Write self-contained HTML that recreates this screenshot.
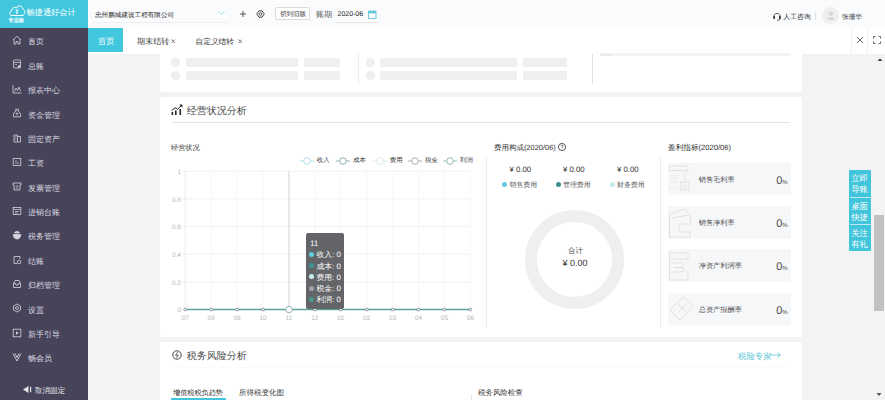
<!DOCTYPE html>
<html><head><meta charset="utf-8">
<style>
*{margin:0;padding:0;box-sizing:border-box;}
html,body{width:885px;height:400px;overflow:hidden;}
body{position:relative;background:#f2f3f5;font-family:"Liberation Sans",sans-serif;color:#333;text-rendering:geometricPrecision;}
.abs{position:absolute;}
.t{position:absolute;white-space:nowrap;line-height:1;}
#side{left:0;top:0;width:88px;height:400px;background:#474358;}
#logo{left:0;top:0;width:88px;height:27.5px;background:#40c7de;}
.nt{font-size:8px;color:#dcdce4;}
#top{left:88px;top:0;width:797px;height:28px;background:#fafbfd;}
#tabs{left:88px;top:28px;width:797px;height:25.5px;background:#fff;}
.card{position:absolute;background:#fff;border-radius:2px;}
.sk{position:absolute;background:#efefef;border-radius:1px;}
.skc{position:absolute;background:#efefef;border-radius:50%;}
.yl{font-size:6.5px;color:#b8b8b8;}
.xl{font-size:6.5px;color:#b8b8b8;width:10px;text-align:center;}
.lg{font-size:6.45px;color:#444;}
.ttr{font-size:7.8px;color:#fff;}
.dot{position:absolute;width:5px;height:5px;border-radius:50%;}
.rc{position:absolute;left:667.5px;width:123.5px;height:32.5px;background:#f6f7f9;}
.rc .n{position:absolute;left:31.2px;top:13.2px;font-size:7.2px;color:#555;line-height:1;white-space:nowrap;}
.rc .v{position:absolute;right:3.8px;top:13px;font-size:11px;color:#4a4a4a;letter-spacing:-0.3px;line-height:1;white-space:nowrap;}
.rc .v small{font-size:6px;}


</style></head><body>
<div id="side" class="abs">
  <div id="logo" class="abs">
    <svg class="abs" style="left:8px;top:4px" width="18" height="13" viewBox="0 0 18 13"><path d="M4 11.5 C1 11.5 1 7.5 3.5 7 C3.5 4 6.5 2.5 8.5 4 C9.5 1 14.5 1 14.8 5 C17.5 5.5 17.5 11.5 14 11.5 Z" fill="none" stroke="#fff" stroke-width="1"/><path d="M7.8 7 L10.2 7 M7.8 8.8 L10.2 8.8 M9 7 V10.5 M7.8 5 L9 7 L10.2 5" fill="none" stroke="#fff" stroke-width="0.7"/></svg>
    <span class="t" style="left:26.5px;top:8.70px;font-size:8.2px;color:#fff;">畅捷通好会计</span>
    <span class="t" style="left:8.2px;top:18.8px;font-size:5.3px;color:#fff;font-weight:bold;">专业版</span>
  </div>
  <svg class="abs" style="left:11.5px;top:35.10px" width="10" height="10" viewBox="0 0 10 10"><path d="M1 5 L5 1.2 L9 5 M2 4.2 V9 H4 V6.5 H6 V9 H8 V4.2" fill="none" stroke="#d6d6de" stroke-width="0.8"/></svg><span class="t nt" style="left:28px;top:38.40px">首页</span>
<svg class="abs" style="left:11.5px;top:59.48px" width="10" height="10" viewBox="0 0 10 10"><rect x="1.5" y="1" width="7" height="8" rx="1" fill="none" stroke="#d6d6de" stroke-width="0.8"/><path d="M1.5 3.5 H8.5 M3 5.5 H5" stroke="#d6d6de" stroke-width="0.7"/><circle cx="7" cy="7.5" r="1.2" fill="#d6d6de"/></svg><span class="t nt" style="left:28px;top:62.78px">总账</span>
<svg class="abs" style="left:11.5px;top:83.86px" width="10" height="10" viewBox="0 0 10 10"><path d="M1 1 V9 H9.5 M2.5 7.5 L4 4 L5.5 6.5 L7 3 L8.5 7" fill="none" stroke="#d6d6de" stroke-width="0.8"/></svg><span class="t nt" style="left:28px;top:87.16px">报表中心</span>
<svg class="abs" style="left:11.5px;top:108.24px" width="10" height="10" viewBox="0 0 10 10"><path d="M3.5 1.2 H6.5 L5.8 3 C8 4 9 6 8.5 8.8 H1.5 C1 6 2 4 4.2 3 Z" fill="none" stroke="#d6d6de" stroke-width="0.8"/><path d="M3.5 5.5 H6.5 M5 4.5 V7.5" stroke="#d6d6de" stroke-width="0.7"/></svg><span class="t nt" style="left:28px;top:111.54px">资金管理</span>
<svg class="abs" style="left:11.5px;top:132.62px" width="10" height="10" viewBox="0 0 10 10"><path d="M2 2 H5.5 V9 H2 Z M5.5 3.5 H8.5 V9 H5.5" fill="none" stroke="#d6d6de" stroke-width="0.8"/><path d="M3 4 H4.5 M3 6 H4.5" stroke="#d6d6de" stroke-width="0.7"/></svg><span class="t nt" style="left:28px;top:135.92px">固定资产</span>
<svg class="abs" style="left:11.5px;top:157.00px" width="10" height="10" viewBox="0 0 10 10"><rect x="1.2" y="1.5" width="7.6" height="7" fill="none" stroke="#d6d6de" stroke-width="0.8"/><path d="M3 4 H5 M3 6 H7" stroke="#d6d6de" stroke-width="0.7"/></svg><span class="t nt" style="left:28px;top:160.30px">工资</span>
<svg class="abs" style="left:11.5px;top:181.38px" width="10" height="10" viewBox="0 0 10 10"><path d="M1 2 H9 V4 H8 V9 H2 V4 H1 Z M3.5 5 H6.5 M3.5 7 H6.5" fill="none" stroke="#d6d6de" stroke-width="0.8"/></svg><span class="t nt" style="left:28px;top:184.68px">发票管理</span>
<svg class="abs" style="left:11.5px;top:205.76px" width="10" height="10" viewBox="0 0 10 10"><rect x="1.2" y="1.5" width="7.6" height="7" fill="none" stroke="#d6d6de" stroke-width="0.8"/><path d="M1.2 3.5 H8.8 M3 5.5 H7 M3 7 H5.5" stroke="#d6d6de" stroke-width="0.7"/></svg><span class="t nt" style="left:28px;top:209.06px">进销台账</span>
<svg class="abs" style="left:11.5px;top:230.14px" width="10" height="10" viewBox="0 0 10 10"><path d="M2.5 3 C2.5 1 7.5 1 7.5 3 M1.2 4.5 H8.8 C8.8 7.5 7 9 5 9 C3 9 1.2 7.5 1.2 4.5 Z" fill="#d6d6de" stroke="#d6d6de" stroke-width="0.8"/><path d="M3 3 H7" stroke="#d6d6de" stroke-width="0.8"/></svg><span class="t nt" style="left:28px;top:233.44px">税务管理</span>
<svg class="abs" style="left:11.5px;top:254.52px" width="10" height="10" viewBox="0 0 10 10"><path d="M8 4 V1.5 H2 V8.5 H5" fill="none" stroke="#d6d6de" stroke-width="0.8"/><circle cx="7" cy="7" r="1.8" fill="none" stroke="#d6d6de" stroke-width="0.8"/></svg><span class="t nt" style="left:28px;top:257.82px">结账</span>
<svg class="abs" style="left:11.5px;top:278.90px" width="10" height="10" viewBox="0 0 10 10"><path d="M1.5 4.5 L3 1.5 H7 L8.5 4.5 V8.5 H1.5 Z M1.5 4.5 H3.8 V6 H6.2 V4.5 H8.5" fill="none" stroke="#d6d6de" stroke-width="0.8"/></svg><span class="t nt" style="left:28px;top:282.20px">归档管理</span>
<svg class="abs" style="left:11.5px;top:303.28px" width="10" height="10" viewBox="0 0 10 10"><path d="M5 1 L8.5 3 V7 L5 9 L1.5 7 V3 Z" fill="none" stroke="#d6d6de" stroke-width="0.8"/><circle cx="5" cy="5" r="1.5" fill="none" stroke="#d6d6de" stroke-width="0.8"/></svg><span class="t nt" style="left:28px;top:306.58px">设置</span>
<svg class="abs" style="left:11.5px;top:327.66px" width="10" height="10" viewBox="0 0 10 10"><rect x="1.2" y="1.2" width="7.6" height="7.6" fill="none" stroke="#d6d6de" stroke-width="0.8"/><path d="M4 3.3 L6.6 5 L4 6.7 Z" fill="#d6d6de"/></svg><span class="t nt" style="left:28px;top:330.96px">新手引导</span>
<svg class="abs" style="left:11.5px;top:352.04px" width="10" height="10" viewBox="0 0 10 10"><path d="M1 1.5 L5 9 L9 1.5 M3 1.5 L5 5.5 L7 1.5" fill="none" stroke="#d6d6de" stroke-width="0.9"/></svg><span class="t nt" style="left:28px;top:355.34px">畅会员</span>

  <svg class="abs" style="left:22.5px;top:386px" width="10" height="7" viewBox="0 0 10 7"><path d="M0 3.5 L5.5 0 V7 Z" fill="#e6e6ec"/><rect x="7" y="0.8" width="1.2" height="5.4" fill="#e6e6ec"/></svg><span class="t" style="left:35px;top:387.00px;font-size:7.55px;color:#e6e6ec;">取消固定</span>
</div>

<div id="top" class="abs"></div>
<span class="t" style="left:95.00px;top:12.70px;font-size:6.6px;color:#222;">忠州鹏城建设工程有限公司</span>
<div class="abs" style="left:92px;top:22px;width:136px;height:1px;background:#eeeff1;"></div>
<svg class="abs" style="left:218.3px;top:11px" width="7" height="4" viewBox="0 0 7 4"><path d="M0.4 0.4 L3.5 3.5 L6.6 0.4" fill="none" stroke="#8fd3da" stroke-width="0.8"/></svg>
<svg class="abs" style="left:239.5px;top:10.8px" width="6" height="6" viewBox="0 0 6 6"><path d="M3 0 V6 M0 3 H6" stroke="#333" stroke-width="0.8"/></svg>
<svg class="abs" style="left:256px;top:9.5px" width="9" height="8" viewBox="0 0 9 8"><path d="M3 0.8 H6 L8.3 4 L6 7.2 H3 L0.7 4 Z" fill="none" stroke="#333" stroke-width="0.9" stroke-linejoin="round"/><circle cx="4.5" cy="4" r="1.4" fill="none" stroke="#333" stroke-width="0.8"/></svg>
<div class="abs" style="left:275px;top:7px;width:34.5px;height:13px;border:0.7px solid #dcdcdc;border-radius:2px;background:#fff;"></div>
<span class="t" style="left:280px;top:11.6px;font-size:6.5px;color:#333;">切到旧版</span>
<span class="t" style="left:316px;top:11.30px;font-size:8.1px;color:#555;">账期</span>
<span class="t" style="left:337.5px;top:12.30px;font-size:6.97px;color:#222;">2020-06</span>
<div class="abs" style="left:336px;top:22px;width:42px;height:1px;background:#e6e6e6;"></div>
<svg class="abs" style="left:368px;top:9.8px" width="8.5" height="9" viewBox="0 0 8.5 9"><rect x="0.5" y="1.3" width="7.5" height="7.2" fill="none" stroke="#5ec6d6" stroke-width="0.9"/><rect x="0.5" y="1.3" width="7.5" height="2" fill="#5ec6d6"/><path d="M2.5 0 V2 M6 0 V2" stroke="#5ec6d6" stroke-width="0.9"/></svg>

<svg class="abs" style="left:772.5px;top:11.5px" width="8" height="9" viewBox="0 0 8 9"><path d="M1 5 V3.8 C1 0.6 7 0.6 7 3.8 V5 M4 8.2 H5.5 C6.5 8.2 7 7.5 7 6.5" fill="none" stroke="#333" stroke-width="0.8"/><rect x="0.3" y="4" width="1.7" height="3" rx="0.5" fill="#333"/><rect x="6" y="4" width="1.7" height="3" rx="0.5" fill="#333"/></svg>
<span class="t" style="left:783.3px;top:14.80px;font-size:6.86px;color:#333;">人工咨询</span>
<div class="abs" style="left:815px;top:12px;width:0.8px;height:7.5px;background:#e0e0e0;"></div>
<div class="abs" style="left:822px;top:6.7px;width:17px;height:17px;border-radius:50%;background:#efefef;"></div>
<svg class="abs" style="left:826.5px;top:10.5px" width="8" height="9" viewBox="0 0 8 9"><circle cx="4" cy="2.6" r="2.2" fill="#d4d4d4"/><path d="M0.3 8.8 C0.3 5.3 7.7 5.3 7.7 8.8 Z" fill="#d4d4d4"/></svg>
<span class="t" style="left:842px;top:14.80px;font-size:6.67px;color:#333;">张珊华</span>

<div id="tabs" class="abs"></div>
<div class="abs" style="left:88px;top:28px;width:34.8px;height:23.8px;background:#42c8de;"></div>
<span class="t" style="left:98px;top:37.9px;font-size:8.2px;color:#fff;">首页</span>
<span class="t" style="left:137px;top:37.80px;font-size:8.1px;color:#333;">期末结转</span><svg class="abs" style="left:171.3px;top:38.8px" width="4.5" height="4.5" viewBox="0 0 4.5 4.5"><path d="M0.4 0.4 L4.1 4.1 M4.1 0.4 L0.4 4.1" stroke="#555" stroke-width="0.75"/></svg>
<span class="t" style="left:195.5px;top:37.80px;font-size:7.7px;color:#333;">自定义结转</span><svg class="abs" style="left:237.8px;top:38.8px" width="4.5" height="4.5" viewBox="0 0 4.5 4.5"><path d="M0.4 0.4 L4.1 4.1 M4.1 0.4 L0.4 4.1" stroke="#555" stroke-width="0.75"/></svg>
<div class="abs" style="left:851px;top:28px;width:1px;height:25.5px;background:#f0f0f0;"></div>
<div class="abs" style="left:867px;top:28px;width:1px;height:25.5px;background:#f0f0f0;"></div>
<svg class="abs" style="left:856px;top:36px" width="8" height="8" viewBox="0 0 8 8"><path d="M1 1 L7 7 M7 1 L1 7" stroke="#555" stroke-width="0.9"/></svg>
<svg class="abs" style="left:872.5px;top:36px" width="8" height="8" viewBox="0 0 8 8"><path d="M0.5 2.5 V0.5 H2.5 M5.5 0.5 H7.5 V2.5 M7.5 5.5 V7.5 H5.5 M2.5 7.5 H0.5 V5.5" fill="none" stroke="#555" stroke-width="0.9"/></svg>

<!-- card 1 -->
<div class="card" style="left:160.2px;top:51.5px;width:641.8px;height:40.5px;border-radius:0 0 2px 2px;"></div>
<div class="skc" style="left:171.2px;top:58.3px;width:8.5px;height:8.5px;"></div>
<div class="skc" style="left:171.2px;top:71.3px;width:8.5px;height:8.5px;"></div>
<div class="sk" style="left:186.2px;top:58.3px;width:111.5px;height:8.4px;"></div>
<div class="sk" style="left:186.2px;top:71.3px;width:111.5px;height:8.4px;"></div>
<div class="sk" style="left:304px;top:58.3px;width:36px;height:8.4px;"></div>
<div class="sk" style="left:304px;top:71.3px;width:36px;height:8.4px;"></div>
<div class="abs" style="left:358.3px;top:53.5px;width:0.8px;height:30px;background:#ececec;"></div>
<div class="skc" style="left:366px;top:58.3px;width:8.5px;height:8.5px;"></div>
<div class="skc" style="left:366px;top:71.3px;width:8.5px;height:8.5px;"></div>
<div class="sk" style="left:380.2px;top:58.3px;width:136.5px;height:8.4px;"></div>
<div class="sk" style="left:380.2px;top:71.3px;width:136.5px;height:8.4px;"></div>
<div class="sk" style="left:523px;top:58.3px;width:44px;height:8.4px;"></div>
<div class="sk" style="left:523px;top:71.3px;width:44px;height:8.4px;"></div>
<div class="abs" style="left:592px;top:53.5px;width:0.9px;height:30.5px;background:#e2e2e2;"></div>
<div class="abs" style="left:600px;top:53.3px;width:191px;height:3px;background:#f4f4f4;"></div><div class="abs" style="left:600px;top:53.5px;width:12px;height:2.5px;background:#ececec;"></div>

<!-- card 2 -->
<div class="card" style="left:160.2px;top:97px;width:641.8px;height:239.6px;"></div>
<svg class="abs" style="left:171px;top:104px" width="12" height="11" viewBox="0 0 12 11"><path d="M0.5 6.5 L4 3.8 L6.5 5.2 L10.5 1.5" fill="none" stroke="#222" stroke-width="1"/><path d="M8.3 0.6 H11.4 V3.7 Z" fill="#222"/><rect x="0.6" y="8" width="1.6" height="3" fill="#222"/><rect x="4" y="6.5" width="1.6" height="4.5" fill="#222"/><rect x="8.5" y="5" width="1.6" height="6" fill="#222"/></svg>
<span class="t" style="left:186.8px;top:106.50px;font-size:10px;color:#444;">经营状况分析</span>
<div class="abs" style="left:172px;top:122px;width:618px;height:0.8px;background:#e4e4e4;"></div>
<span class="t" style="left:171px;top:144.70px;font-size:7.15px;color:#333;">经营状况</span>
<svg class="abs" style="left:299.7px;top:156.5px" width="14" height="8" viewBox="0 0 14 8"><line x1="0" y1="4" x2="3.7" y2="4" stroke="#8fd6de" stroke-width="0.7"/><line x1="10.3" y1="4" x2="14" y2="4" stroke="#8fd6de" stroke-width="0.7"/><circle cx="7" cy="4" r="3.3" fill="#fff" stroke="#8fd6de" stroke-width="0.7"/></svg><span class="t lg" style="left:316.7px;top:158.2px">收入</span><svg class="abs" style="left:336.0px;top:156.5px" width="14" height="8" viewBox="0 0 14 8"><line x1="0" y1="4" x2="3.7" y2="4" stroke="#5b8f97" stroke-width="0.7"/><line x1="10.3" y1="4" x2="14" y2="4" stroke="#5b8f97" stroke-width="0.7"/><circle cx="7" cy="4" r="3.3" fill="#fff" stroke="#5b8f97" stroke-width="0.7"/></svg><span class="t lg" style="left:353.0px;top:158.2px">成本</span><svg class="abs" style="left:372.7px;top:156.5px" width="14" height="8" viewBox="0 0 14 8"><line x1="0" y1="4" x2="3.7" y2="4" stroke="#cfe3e3" stroke-width="0.7"/><line x1="10.3" y1="4" x2="14" y2="4" stroke="#cfe3e3" stroke-width="0.7"/><circle cx="7" cy="4" r="3.3" fill="#fff" stroke="#cfe3e3" stroke-width="0.7"/></svg><span class="t lg" style="left:389.7px;top:158.2px">费用</span><svg class="abs" style="left:408.0px;top:156.5px" width="14" height="8" viewBox="0 0 14 8"><line x1="0" y1="4" x2="3.7" y2="4" stroke="#8c8c8c" stroke-width="0.7"/><line x1="10.3" y1="4" x2="14" y2="4" stroke="#8c8c8c" stroke-width="0.7"/><circle cx="7" cy="4" r="3.3" fill="#fff" stroke="#8c8c8c" stroke-width="0.7"/></svg><span class="t lg" style="left:425.0px;top:158.2px">税金</span><svg class="abs" style="left:443.0px;top:156.5px" width="14" height="8" viewBox="0 0 14 8"><line x1="0" y1="4" x2="3.7" y2="4" stroke="#6a9e9a" stroke-width="0.7"/><line x1="10.3" y1="4" x2="14" y2="4" stroke="#6a9e9a" stroke-width="0.7"/><circle cx="7" cy="4" r="3.3" fill="#fff" stroke="#6a9e9a" stroke-width="0.7"/></svg><span class="t lg" style="left:460.0px;top:158.2px">利润</span>
<svg class="abs" style="left:0;top:0" width="885" height="400" viewBox="0 0 885 400">
<line x1="185.3" y1="171.30" x2="470.4" y2="171.30" stroke="#ededed" stroke-width="0.7"/>
<line x1="183.3" y1="171.30" x2="185.3" y2="171.30" stroke="#ccc" stroke-width="0.7"/>
<line x1="185.3" y1="198.94" x2="470.4" y2="198.94" stroke="#ededed" stroke-width="0.7"/>
<line x1="183.3" y1="198.94" x2="185.3" y2="198.94" stroke="#ccc" stroke-width="0.7"/>
<line x1="185.3" y1="226.58" x2="470.4" y2="226.58" stroke="#ededed" stroke-width="0.7"/>
<line x1="183.3" y1="226.58" x2="185.3" y2="226.58" stroke="#ccc" stroke-width="0.7"/>
<line x1="185.3" y1="254.22" x2="470.4" y2="254.22" stroke="#ededed" stroke-width="0.7"/>
<line x1="183.3" y1="254.22" x2="185.3" y2="254.22" stroke="#ccc" stroke-width="0.7"/>
<line x1="185.3" y1="281.86" x2="470.4" y2="281.86" stroke="#ededed" stroke-width="0.7"/>
<line x1="183.3" y1="281.86" x2="185.3" y2="281.86" stroke="#ccc" stroke-width="0.7"/>
<line x1="185.3" y1="309.50" x2="470.4" y2="309.50" stroke="#ededed" stroke-width="0.7"/>
<line x1="183.3" y1="309.50" x2="185.3" y2="309.50" stroke="#ccc" stroke-width="0.7"/>
<line x1="185.30" y1="171.3" x2="185.30" y2="309.5" stroke="#f3f4f4" stroke-width="0.7"/>
<line x1="211.22" y1="171.3" x2="211.22" y2="309.5" stroke="#f3f4f4" stroke-width="0.7"/>
<line x1="237.14" y1="171.3" x2="237.14" y2="309.5" stroke="#f3f4f4" stroke-width="0.7"/>
<line x1="263.05" y1="171.3" x2="263.05" y2="309.5" stroke="#f3f4f4" stroke-width="0.7"/>
<line x1="288.97" y1="171.3" x2="288.97" y2="309.5" stroke="#f3f4f4" stroke-width="0.7"/>
<line x1="314.89" y1="171.3" x2="314.89" y2="309.5" stroke="#f3f4f4" stroke-width="0.7"/>
<line x1="340.81" y1="171.3" x2="340.81" y2="309.5" stroke="#f3f4f4" stroke-width="0.7"/>
<line x1="366.73" y1="171.3" x2="366.73" y2="309.5" stroke="#f3f4f4" stroke-width="0.7"/>
<line x1="392.65" y1="171.3" x2="392.65" y2="309.5" stroke="#f3f4f4" stroke-width="0.7"/>
<line x1="418.56" y1="171.3" x2="418.56" y2="309.5" stroke="#f3f4f4" stroke-width="0.7"/>
<line x1="444.48" y1="171.3" x2="444.48" y2="309.5" stroke="#f3f4f4" stroke-width="0.7"/>
<line x1="470.40" y1="171.3" x2="470.40" y2="309.5" stroke="#f3f4f4" stroke-width="0.7"/>
<line x1="185.3" y1="171.3" x2="185.3" y2="309.5" stroke="#ececec" stroke-width="0.7"/>
<line x1="288.97" y1="171.3" x2="288.97" y2="309.5" stroke="#d8d8d8" stroke-width="1.1"/>
<line x1="185.3" y1="309.5" x2="470.4" y2="309.5" stroke="#57a39a" stroke-width="1.4"/>
<circle cx="185.30" cy="309.5" r="1.4" fill="#fff" stroke="#557" stroke-width="0.6"/>
<circle cx="211.22" cy="309.5" r="1.4" fill="#fff" stroke="#557" stroke-width="0.6"/>
<circle cx="237.14" cy="309.5" r="1.4" fill="#fff" stroke="#557" stroke-width="0.6"/>
<circle cx="263.05" cy="309.5" r="1.4" fill="#fff" stroke="#557" stroke-width="0.6"/>
<circle cx="288.97" cy="309.5" r="3.3" fill="#fff" stroke="#8aa" stroke-width="0.9"/>
<circle cx="314.89" cy="309.5" r="1.4" fill="#fff" stroke="#557" stroke-width="0.6"/>
<circle cx="340.81" cy="309.5" r="1.4" fill="#fff" stroke="#557" stroke-width="0.6"/>
<circle cx="366.73" cy="309.5" r="1.4" fill="#fff" stroke="#557" stroke-width="0.6"/>
<circle cx="392.65" cy="309.5" r="1.4" fill="#fff" stroke="#557" stroke-width="0.6"/>
<circle cx="418.56" cy="309.5" r="1.4" fill="#fff" stroke="#557" stroke-width="0.6"/>
<circle cx="444.48" cy="309.5" r="1.4" fill="#fff" stroke="#557" stroke-width="0.6"/>
<circle cx="470.40" cy="309.5" r="1.4" fill="#fff" stroke="#557" stroke-width="0.6"/>
<circle cx="574.5" cy="259.5" r="43.5" fill="none" stroke="#efefef" stroke-width="12"/>
</svg>
<span class="t yl" style="right:704px;top:170.10px">1</span><span class="t yl" style="right:704px;top:197.74px">0.8</span><span class="t yl" style="right:704px;top:225.38px">0.6</span><span class="t yl" style="right:704px;top:253.02px">0.4</span><span class="t yl" style="right:704px;top:280.66px">0.2</span><span class="t yl" style="right:704px;top:308.30px">0</span>
<span class="t xl" style="left:180.30px;top:315.5px">07</span><span class="t xl" style="left:206.22px;top:315.5px">08</span><span class="t xl" style="left:232.14px;top:315.5px">09</span><span class="t xl" style="left:258.05px;top:315.5px">10</span><span class="t xl" style="left:283.97px;top:315.5px">11</span><span class="t xl" style="left:309.89px;top:315.5px">12</span><span class="t xl" style="left:335.81px;top:315.5px">01</span><span class="t xl" style="left:361.73px;top:315.5px">02</span><span class="t xl" style="left:387.65px;top:315.5px">03</span><span class="t xl" style="left:413.56px;top:315.5px">04</span><span class="t xl" style="left:439.48px;top:315.5px">05</span><span class="t xl" style="left:465.40px;top:315.5px">06</span>
<!-- tooltip -->
<div class="abs" style="left:306px;top:233px;width:38px;height:75.5px;background:#646568;border-radius:2px;"></div>
<span class="t ttr" style="left:310px;top:239.5px;font-size:8px;">11</span>
<div class="dot" style="left:308.7px;top:251.80px;background:#5ccfe0;"></div><span class="t ttr" style="left:316.5px;top:251.20px;">收入: 0</span>
<div class="dot" style="left:308.7px;top:263.10px;background:#3c9594;"></div><span class="t ttr" style="left:316.5px;top:262.50px;">成本: 0</span>
<div class="dot" style="left:308.7px;top:274.40px;background:#c6ecee;"></div><span class="t ttr" style="left:316.5px;top:273.80px;">费用: 0</span>
<div class="dot" style="left:308.7px;top:285.70px;background:#a2a1ae;"></div><span class="t ttr" style="left:316.5px;top:285.10px;">税金: 0</span>
<div class="dot" style="left:308.7px;top:297.00px;background:#4c9a8a;"></div><span class="t ttr" style="left:316.5px;top:296.40px;">利润: 0</span>


<div class="abs" style="left:486px;top:157.5px;width:0.8px;height:170px;background:#ececec;"></div>
<span class="t" style="left:494px;top:143.90px;font-size:7.47px;color:#333;">费用构成(2020/06)</span>
<svg class="abs" style="left:558.4px;top:142.8px" width="8" height="8" viewBox="0 0 8 8"><circle cx="4" cy="4" r="3.6" fill="none" stroke="#333" stroke-width="0.8"/><path d="M2.9 3 C2.9 1.8 5.1 1.8 5.1 3 C5.1 3.9 4 3.9 4 4.9" fill="none" stroke="#444" stroke-width="0.7"/><circle cx="4" cy="6" r="0.45" fill="#444"/></svg>
<span class="t" style="left:509.5px;top:165.50px;font-size:7.8px;color:#333;">¥ 0.00</span>
<span class="t" style="left:563px;top:165.5px;font-size:7.8px;color:#333;">¥ 0.00</span>
<span class="t" style="left:617px;top:165.5px;font-size:7.8px;color:#333;">¥ 0.00</span>
<div class="dot" style="left:502px;top:181.7px;width:5px;height:5px;background:#5ecbe0;"></div><span class="t" style="left:509.5px;top:182.80px;font-size:6.9px;color:#555;">销售费用</span>
<div class="dot" style="left:555.7px;top:181.7px;width:5px;height:5px;background:#3b8f8c;"></div><span class="t" style="left:563px;top:182.80px;font-size:6.9px;color:#555;">管理费用</span>
<div class="dot" style="left:610px;top:181.7px;width:5px;height:5px;background:#c2e8ea;"></div><span class="t" style="left:617px;top:182.80px;font-size:6.9px;color:#555;">财务费用</span>
<span class="t" style="left:568px;top:246.5px;font-size:7.4px;color:#444;">合计</span>
<span class="t" style="left:562.5px;top:258.6px;font-size:9px;color:#333;">¥ 0.00</span>

<div class="abs" style="left:660px;top:157.5px;width:0.8px;height:170px;background:#ececec;"></div>
<span class="t" style="left:668px;top:144.30px;font-size:7.63px;color:#333;">盈利指标(2020/06)</span>
<div class="rc" style="top:162.5px;"><svg class="abs" style="left:0.5px;top:0.5px" width="28" height="32" viewBox="0 0 28 32"><rect x="1" y="3" width="19" height="4.5" rx="1.5" fill="none" stroke="#dcdcdc" stroke-width="0.9"/><path d="M17 7.5 V19 M2.5 12 H10 M2.5 15.5 H10 M2.5 19 H9 M1 26 L3.5 24 L5.5 26 L8.5 23" fill="none" stroke="#e0e0e0" stroke-width="0.8" stroke-dasharray="1.2 0.6"/><rect x="13" y="19" width="8" height="8" fill="none" stroke="#dcdcdc" stroke-width="0.9"/><path d="M14 23 H20 M16 21 V27 M18 21 V27" stroke="#e4e4e4" stroke-width="0.6"/></svg><span class="n">销售毛利率</span><span class="v">0<small>%</small></span></div>
<div class="rc" style="top:206px;"><svg class="abs" style="left:0.5px;top:0.5px" width="28" height="32" viewBox="0 0 28 32"><path d="M1.5 8 C6 6 12 3 16 2.5 C18 2.3 19 4 19 6 M1.5 8 V30 H22 V25 M4 11 L20 8 C22 8 22.5 10 22.5 12 V17 M22.5 17 H13 C11.5 17 11 18 11 19.5 V22.5 C11 24 12 25 13.5 25 H22.5" fill="none" stroke="#dedede" stroke-width="0.9"/></svg><span class="n">销售净利率</span><span class="v">0<small>%</small></span></div>
<div class="rc" style="top:249px;"><svg class="abs" style="left:0.5px;top:0.5px" width="28" height="32" viewBox="0 0 28 32"><path d="M1.5 3 H20 V9 H3 M1.5 3 V30 H20 V20 M3 13 H13 C16 13 16 17.5 13 17.5 H6 M6 17.5 H13.5 C17 17.5 17 22 13.5 22 H3" fill="none" stroke="#dedede" stroke-width="0.9"/></svg><span class="n">净资产利润率</span><span class="v">0<small>%</small></span></div>
<div class="rc" style="top:292.5px;"><svg class="abs" style="left:0.5px;top:0.5px" width="28" height="32" viewBox="0 0 28 32"><path d="M2 17 L15 4 L25 13 L12 27 Z M5 20 L8 24 M10 11 L18 19 M18 10 L10 20" fill="none" stroke="#dedede" stroke-width="0.9"/></svg><span class="n">总资产报酬率</span><span class="v">0<small>%</small></span></div>


<!-- card 3 -->
<div class="card" style="left:160.2px;top:342.4px;width:641.8px;height:70px;"></div>
<svg class="abs" style="left:171.5px;top:350px" width="10" height="10" viewBox="0 0 10 10"><circle cx="5" cy="5" r="4.2" fill="none" stroke="#333" stroke-width="0.9"/><path d="M5.6 2.2 L3.6 5.3 H6.2 L4.4 7.8" fill="none" stroke="#333" stroke-width="0.8"/></svg>
<span class="t" style="left:186.8px;top:352.10px;font-size:10px;color:#444;">税务风险分析</span>
<div class="abs" style="left:172px;top:366.5px;width:618px;height:0.8px;background:#fafafa;"></div>
<span class="t" style="left:738px;top:351.50px;font-size:8.4px;color:#55c4d4;">税险专家</span><svg class="abs" style="left:769.5px;top:352px" width="11" height="6" viewBox="0 0 11 6"><path d="M0 3 H10.3 M7.5 0.3 L10.3 3 L7.5 5.7" fill="none" stroke="#55c4d4" stroke-width="0.8"/></svg>
<span class="t" style="left:173px;top:390.20px;font-size:7.15px;color:#333;">增值税税负趋势</span>
<div class="abs" style="left:171px;top:397.8px;width:54.7px;height:3px;background:#42c6dc;"></div>
<span class="t" style="left:239px;top:389px;font-size:7.5px;color:#333;">所得税变化图</span>
<div class="abs" style="left:470.5px;top:394px;width:0.8px;height:6px;background:#e6e6e6;"></div>
<span class="t" style="left:478px;top:389px;font-size:7.46px;color:#333;">税务风险检查</span>

<!-- scrollbar -->
<div class="abs" style="left:873px;top:53.5px;width:12px;height:346.5px;background:#f2f3f5;"></div>
<svg class="abs" style="left:876.5px;top:57px" width="6" height="5" viewBox="0 0 6 5"><path d="M0.5 4 L3 1.3 L5.5 4 Z" fill="#444"/></svg>
<svg class="abs" style="left:876px;top:392px" width="6" height="5" viewBox="0 0 6 5"><path d="M0.5 1 L3 4 L5.5 1 Z" fill="#555"/></svg>
<div class="abs" style="left:874px;top:215.4px;width:10px;height:95.5px;background:#c1c1c1;"></div>

<!-- float widget -->
<div class="abs" style="left:849px;top:170px;width:22.3px;height:81.3px;background:#40c5db;border-radius:1px;"></div>
<div class="abs" style="left:850px;top:196.5px;width:20.5px;height:0.6px;background:#bfeaf0;"></div>
<div class="abs" style="left:850px;top:224px;width:20.5px;height:0.6px;background:#bfeaf0;"></div>
<span class="t" style="left:851.2px;top:172.5px;font-size:8.4px;color:#fff;line-height:11.5px;">立即<br>导账</span>
<span class="t" style="left:851.2px;top:200.5px;font-size:8.4px;color:#fff;line-height:11.5px;">桌面<br>快捷</span>
<span class="t" style="left:851.2px;top:227.5px;font-size:8.4px;color:#fff;line-height:11.5px;">关注<br>有礼</span>

</body></html>
